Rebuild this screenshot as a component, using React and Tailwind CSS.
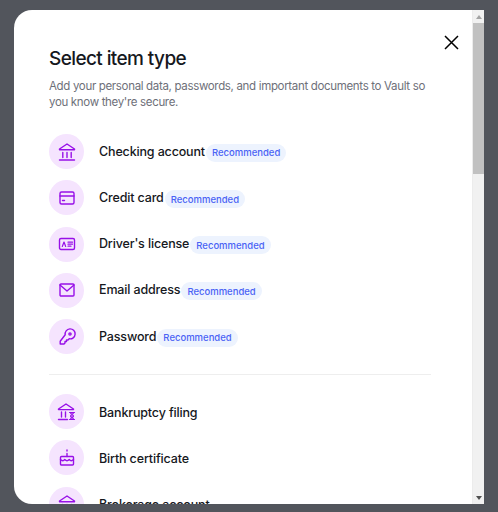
import React from "react";

const P = { fill: "none", stroke: "#9810e8", strokeWidth: 1.4, strokeLinecap: "round", strokeLinejoin: "round" };
const Bank = () => (
  <svg width="18" height="18" viewBox="0 0 18 18" {...P}>
    <path d="M1.5 6 9 1l7.5 5v.8h-15z" />
    <path d="M4.8 9.500v5M9 9.500v5M13.2 9.500v5M1.500 17h15" />
  </svg>
);
const Card = () => (
  <svg width="18" height="18" viewBox="0 0 18 18" {...P}>
    <rect x="2" y="3" width="14" height="12" rx="1.5" />
    <path d="M2 7h14M4.500 11.500h2" />
  </svg>
);
const License = () => (
  <svg width="18" height="18" viewBox="0 0 18 18" {...P}>
    <rect x="1.5" y="3.5" width="15" height="11" rx="1.5" />
    <path d="M4.300 11.500 6 7l1.700 4.500M10 7.200h4.500M10 9.200h4.500M10 11.200h3" strokeWidth="1.2" />
  </svg>
);
const Mail = () => (
  <svg width="18" height="18" viewBox="0 0 18 18" {...P}>
    <rect x="2" y="3" width="14" height="12" rx="1" />
    <path d="m2 4 7 6 7-6" />
  </svg>
);
const Key = () => (
  <svg width="18" height="18" viewBox="0 0 18 18" {...P}>
    <path d="M7.200 6.800a5 5 0 1 1 4 4l-1.200 1.200H8.500v1.500H7V15l-1 1H2.200v-2.800z" />
    <circle cx="12" cy="6" r="1.1" />
  </svg>
);
const Bankruptcy = () => (
  <svg width="20" height="18" viewBox="0 0 20 18" {...P}>
    <path d="M1.500 6 9 1l7.500 5v.6h-15z" />
    <path d="M4.500 9v5M8.500 9v5M1.500 16.500h9" />
    <path d="M12.500 9.500h5M12.500 16.500h5M13.500 9.500c0 2 3 2.200 3 3.500s-3 1.500-3 3.500M16.500 9.500c0 2-3 2.200-3 3.500s3 1.500 3 3.500" strokeWidth="1.2" />
  </svg>
);
const Cake = () => (
  <svg width="18" height="18" viewBox="0 0 18 18" {...P}>
    <path d="M9 1v1M9 4.500v3" />
    <rect x="2.500" y="7.500" width="13" height="8.500" rx="1" />
    <path d="M2.500 10.500c1.600 1.600 3 1.600 4.300 0 1.400 1.600 3 1.600 4.400 0 1.300 1.600 2.700 1.600 4.300 0" />
  </svg>
);

const rows1 = [
  [Bank, "Checking account"],
  [Card, "Credit card"],
  [License, "Driver's license"],
  [Mail, "Email address"],
  [Key, "Password"],
];
const rows2 = [
  [Bankruptcy, "Bankruptcy filing"],
  [Cake, "Birth certificate"],
  [Bank, "Brokerage account"],
];

function Row({ Icon, label, rec }) {
  return (
    <div className="flex items-center h-[35px] shrink-0">
      <div className="w-[35px] h-[35px] rounded-full bg-[#f5e4fe] flex items-center justify-center shrink-0">
        <Icon />
      </div>
      <span className={`ml-[15px] text-[12.5px] tracking-[-0.15px] font-medium text-[#16181d] whitespace-nowrap ${rec ? "pt-[1px]" : "pt-[3px]"}`}>{label}</span>
      {rec && (
        <span className="ml-[1px] mt-[2px] h-[18px] px-[6px] pt-[2px] flex items-center rounded-full bg-[#edf3fe] text-[#4a63f5] text-[9.5px] font-medium whitespace-nowrap">
          Recommended
        </span>
      )}
    </div>
  );
}

export default function App() {
  return (
    <div className="w-[498px] h-[512px] bg-[#52555c] pt-[10px] pl-[14px] overflow-hidden" style={{ fontFamily: "Inter, 'Liberation Sans', sans-serif" }}>
      <div className="w-[470px] h-[494px] bg-white rounded-l-[18px] flex overflow-hidden">
        <div className="relative flex-1 overflow-hidden pl-[35px] pr-[41px] pt-[38px]">
          <button className="absolute right-[13px] top-[25px] text-black">
            <svg width="15" height="15" viewBox="0 0 15 15" fill="none" stroke="currentColor" strokeWidth="1.5">
              <path d="M1 1l13 13M14 1 1 14" />
            </svg>
          </button>
          <h1 className="text-[19px] tracking-[-0.6px] leading-[22px] font-medium text-[#16181d]">Select item type</h1>
          <p className="mt-[8px] text-[11.5px] tracking-[-0.33px] leading-[16px] text-[#6e7079] whitespace-nowrap">
            Add your personal data, passwords, and important documents to Vault so
            <br />
            you know they're secure.
          </p>
          <div className="mt-[24px] flex flex-col gap-[11.25px]">
            {rows1.map(([I, l]) => (
              <Row key={l} Icon={I} label={l} rec />
            ))}
          </div>
          <div className="mt-[20px] mb-[19px] border-t border-[#eeeeee]" />
          <div className="flex flex-col gap-[11.25px]">
            {rows2.map(([I, l]) => (
              <Row key={l} Icon={I} label={l} />
            ))}
          </div>
        </div>
        <div className="w-[12px] bg-[#f1f1f1] flex flex-col items-center shrink-0 border-l border-[#ececec]">
          <div className="h-[13px] flex items-center justify-center shrink-0">
            <div className="w-0 h-0 border-x-[3.5px] border-x-transparent border-b-[4px] border-b-[#a3a3a3]" />
          </div>
          <div className="w-full h-[151px] bg-[#c1c1c1] shrink-0" />
          <div className="flex-1" />
          <div className="h-[13px] flex items-center justify-center shrink-0">
            <div className="w-0 h-0 border-x-[3.5px] border-x-transparent border-t-[4px] border-t-[#505050]" />
          </div>
        </div>
      </div>
    </div>
  );
}
